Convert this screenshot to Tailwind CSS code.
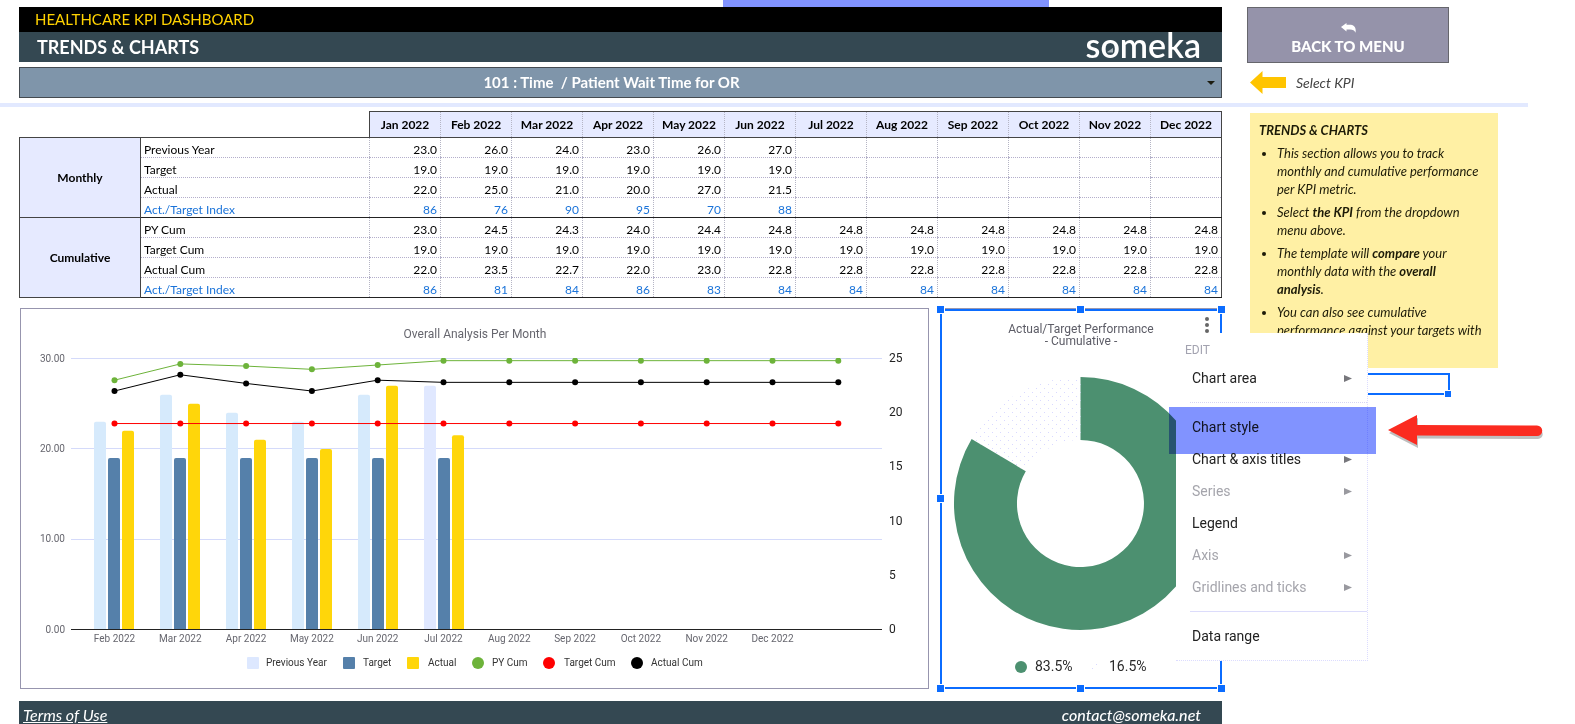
<!DOCTYPE html>
<html lang="en">
<head>
<meta charset="utf-8">
<title>Healthcare KPI Dashboard</title>
<script src="https://cdn.jsdelivr.net/npm/@tailwindcss/browser@4"></script>
</head>
<body class="bg-white font-[Lato,sans-serif] text-black">
<div class="relative min-h-screen">
  <div class="ml-[723px] h-[7px] w-[326px] bg-[#8193ff]"></div>

  <header class="flex">
    <div class="min-w-0 flex-1 pl-[19px]">
      <div class="flex h-[25px] items-center bg-black pl-4 text-[15px] text-[#ffd200]">HEALTHCARE KPI DASHBOARD</div>
      <div class="flex h-[30px] items-center justify-between bg-[#344852] pl-[18px] pr-[21px] text-white">
        <h1 class="text-[18px] font-bold">TRENDS &amp; CHARTS</h1>
        <span class="relative self-start text-[34px] leading-[26px] font-semibold">someka<svg class="absolute left-[21px] top-[16px]" width="7" height="5" viewBox="0 0 7 5"><path d="M0 4 6 0v4.500H1z" fill="#a9b4ba"/></svg></span>
      </div>
      <div class="relative mt-[5px]">
        <select aria-label="KPI" class="block h-[31px] w-full appearance-none border border-[#444a50] bg-[#7f95aa] pr-[18px] text-center text-[15px] font-bold text-white [text-align-last:center]">
          <option>101 : Time&nbsp; / Patient Wait Time for OR</option>
        </select>
        <svg class="pointer-events-none absolute right-[7px] top-[14px]" width="8" height="4" viewBox="0 0 8 4"><path d="M0 0h8L4 4z" fill="#1c1c10"/></svg>
      </div>
    </div>
    <div class="w-[353px] pl-[25px]">
      <button class="flex h-[56px] w-[202px] flex-col items-center justify-end border border-[#66666c] bg-[#9593aa] pb-[6px] text-white">
        <svg width="15" height="10" viewBox="0 0 15 10"><path d="M0 4 5.500 0v1.800h3c4.500 0 7 2.500 6 8-1-2.600-2.600-3.300-5.500-3.300H5.500v2z" fill="#fff"/></svg>
        <span class="mt-[3px] text-[15px] leading-[20px] font-black">BACK TO MENU</span>
      </button>
      <div class="mt-2 flex items-center gap-[10px] pl-[3px]">
        <svg width="36" height="23" viewBox="0 0 36 23"><path d="M0 11.500 12.500 0v6H36v11H12.500v6z" fill="#ffc400"/></svg>
        <span class="text-[14px] leading-[23px] italic text-[#444]">Select KPI</span>
      </div>
    </div>
  </header>

  <div class="mr-[47px] mt-[5px] h-[4px] bg-[#e2e9ff]"></div>

  <main class="mt-1 flex">
    <div class="min-w-0 flex-1 pl-[19px]">
      <table class="w-full table-fixed border-collapse text-[12px] leading-[18px]">
        <colgroup><col class="w-[121px]"><col class="w-[229px]"></colgroup>
        <thead><tr id="months" class="h-[26px]"><td colspan="2"></td></tr></thead>
        <tbody id="rows"></tbody>
      </table>

      <div class="mt-[10px] flex gap-[11px]">
        <section aria-label="Overall analysis" class="ml-px flex-1 border border-[#9795ae]">
          <svg id="combo" class="block w-full font-[Roboto,sans-serif]" viewBox="21 309 907 379"></svg>
        </section>
        <section aria-label="Actual target performance" class="w-[282px]">
          <svg class="block w-full overflow-visible font-[Roboto,sans-serif]" viewBox="940 308 282 381">
            <defs>
              <pattern id="dots" width="8" height="8" patternUnits="userSpaceOnUse"><path d="M0 0h1v1h-1zM4 4h1v1h-1z" fill="#d9d9ff"/></pattern>
            </defs>
            <path d="M1080.500 377A126.500 126.500 0 1 1 971.600 439.100L1025.800 471.200A63.500 63.500 0 1 0 1080.500 440z" fill="#4c9070"/>
            <path d="M971.600 439.100A126.500 126.500 0 0 1 1080.500 377V440A63.500 63.500 0 0 0 1025.800 471.200z" fill="url(#dots)"/>
            <g font-size="12" fill="#5c5c66" text-anchor="middle"><text x="1081" y="333">Actual/Target Performance</text><text x="1081" y="345">- Cumulative -</text></g>
            <circle cx="1021" cy="667" r="6" fill="#4c9070"/>
            <g font-size="14" fill="#2a2a2a"><text x="1035" y="671">83.5%</text><text x="1109" y="671">16.5%</text></g>
            <path d="M1092 668h1v1h-1zM1096 664h1v1h-1z" fill="#d9d9ff"/>
            <g fill="#666"><circle cx="1207" cy="319" r="2"/><circle cx="1207" cy="325" r="2"/><circle cx="1207" cy="331" r="2"/></g>
            <rect x="940.500" y="308.500" width="281" height="380" fill="none" stroke="#9a98ae"/>
            <rect x="941" y="310" width="280" height="378" fill="none" stroke="#0b6cff" stroke-width="2"/>
            <g id="handles" fill="#0b6cff" stroke="#fff"></g>
          </svg>
        </section>
      </div>
    </div>

    <aside class="w-[353px] pl-[28px] pt-[2px] text-[13px] leading-[18px] italic text-[#1d1b08]">
      <div class="h-[255px] w-[248px] overflow-hidden bg-[#fff0a4] py-[8px] pl-[9px]">
        <h2 class="font-bold">TRENDS &amp; CHARTS</h2>
        <ul class="mt-[5px] list-disc space-y-[5px] pl-[18px]">
          <li>This section allows you to track<br>monthly and cumulative performance<br>per KPI metric.</li>
          <li>Select <b>the KPI</b> from the dropdown<br>menu above.</li>
          <li>The template will <b>compare</b> your<br>monthly data with the <b>overall<br>analysis</b>.</li>
          <li>You can also see cumulative<br>performance against your targets with</li>
        </ul>
      </div>
    </aside>
  </main>

  <footer class="ml-[19px] mr-[353px] mt-3 flex justify-between bg-[#344852] pl-1 pr-[21px] pt-[4px] text-[16px] leading-[19px] italic text-white">
    <a href="#terms" class="underline underline-offset-1">Terms of Use</a>
    <a href="mailto:contact@someka.net" class="font-medium">contact@someka.net</a>
  </footer>

  <!-- selected cell range partly covered by the menu -->
  <svg class="absolute right-[122px] top-[373px]" width="86" height="25" viewBox="0 0 86 25"><path d="M0 1h82v20H0" fill="none" stroke="#0b6cff" stroke-width="2"/><rect x="77.500" y="17.500" width="7" height="7" fill="#0b6cff" stroke="#fff"/></svg>

  <!-- chart context menu -->
  <div role="menu" class="absolute right-[207px] top-[333px] w-[192px] border-b border-r border-dotted border-[#dcdcff] bg-white pb-2 font-[Roboto,sans-serif] text-[14px] text-[#222]">
    <div class="h-[29px] pl-[9px] text-[12px] leading-[34px] text-[#a3a3b0]">EDIT</div>
    <button role="menuitem" class="flex h-8 w-full items-center justify-between pl-4 pr-[15px]">Chart area<svg width="8" height="7" viewBox="0 0 8 7"><path d="M0 0 8 3.500 0 7z" fill="#77777c"/></svg></button>
    <hr class="mb-2 ml-[14px] mt-2 border-dotted border-[#d6d6f4]">
    <button role="menuitem" class="flex h-8 w-full items-center justify-between pl-4 pr-[15px]">Chart style</button>
    <button role="menuitem" class="flex h-8 w-full items-center justify-between pl-4 pr-[15px]">Chart &amp; axis titles<svg width="8" height="7" viewBox="0 0 8 7"><path d="M0 0 8 3.500 0 7z" fill="#77777c"/></svg></button>
    <button role="menuitem" disabled class="flex h-8 w-full items-center justify-between pl-4 pr-[15px] text-[#a5a5ac]">Series<svg width="8" height="7" viewBox="0 0 8 7"><path d="M0 0 8 3.500 0 7z" fill="#99999f"/></svg></button>
    <button role="menuitem" class="flex h-8 w-full items-center justify-between pl-4 pr-[15px]">Legend</button>
    <button role="menuitem" disabled class="flex h-8 w-full items-center justify-between pl-4 pr-[15px] text-[#a5a5ac]">Axis<svg width="8" height="7" viewBox="0 0 8 7"><path d="M0 0 8 3.500 0 7z" fill="#99999f"/></svg></button>
    <button role="menuitem" disabled class="flex h-8 w-full items-center justify-between pl-4 pr-[15px] text-[#a5a5ac]">Gridlines and ticks<svg width="8" height="7" viewBox="0 0 8 7"><path d="M0 0 8 3.500 0 7z" fill="#99999f"/></svg></button>
    <hr class="mb-2 ml-[14px] mt-2 border-[#dcdcfb]">
    <button role="menuitem" class="flex h-8 w-full items-center justify-between pl-4 pr-[15px]">Data range</button>
  </div>
  <div class="pointer-events-none absolute right-[199px] top-[407px] h-[47px] w-[207px] bg-[#8193ff] mix-blend-multiply"></div>

  <!-- callout arrow -->
  <svg class="absolute right-[28px] top-[413px]" width="160" height="36" viewBox="0 0 160 36">
    <g transform="translate(1 3)" fill="#000" opacity=".25"><path d="M1 17 30 2v10.500l120 1a4.500 4.500 0 0 1 0 9.500l-120-.500V32z"/></g>
    <path d="M1 17 30 2v10l120 .500a5 5 0 0 1 0 10.500l-120-.500V32z" fill="#fb2b20"/>
  </svg>
</div>

<script>
const names = ['Jan','Feb','Mar','Apr','May','Jun','Jul','Aug','Sep','Oct','Nov','Dec'].map(m => m + ' 2022');
document.getElementById('months').innerHTML += names.map((m, i) =>
  `<th scope="col" class="border border-y-[#444] bg-[#e6eaff] p-0 font-bold ${i === 0 ? 'border-l-[#444] border-r-[#b5b5c5] [border-right-style:dotted]' : i === 11 ? 'border-r-[#444] border-l-[#b5b5c5] [border-left-style:dotted]' : 'border-x-[#b5b5c5] [border-left-style:dotted] [border-right-style:dotted]'}">${m}</th>`).join('');

const groups = [
  ['Monthly', [['Previous Year','23.0 26.0 24.0 23.0 26.0 27.0'],['Target','19.0 19.0 19.0 19.0 19.0 19.0'],['Actual','22.0 25.0 21.0 20.0 27.0 21.5'],['Act./Target Index','86 76 90 95 70 88']]],
  ['Cumulative', [['PY Cum','23.0 24.5 24.3 24.0 24.4 24.8 24.8 24.8 24.8 24.8 24.8 24.8'],['Target Cum','19.0 19.0 19.0 19.0 19.0 19.0 19.0 19.0 19.0 19.0 19.0 19.0'],['Actual Cum','22.0 23.5 22.7 22.0 23.0 22.8 22.8 22.8 22.8 22.8 22.8 22.8'],['Act./Target Index','86 81 84 86 83 84 84 84 84 84 84 84']]]
];
document.getElementById('rows').innerHTML = groups.map(([g, rows]) => rows.map(([label, vals], r) => {
  const v = vals.split(' ');
  const color = r === 3 ? 'text-[#1a73d9]' : '';
  const edge = r === 3 ? 'border-b border-b-[#222]' : 'border-b border-b-[#b3aecb] [border-bottom-style:dotted]';
  let h = '<tr class="h-[20px]">';
  if (r === 0) h += `<th scope="rowgroup" rowspan="4" class="border border-[#444] bg-[#e6eaff] p-0 font-bold">${g}</th>`;
  h += `<th scope="row" class="${edge} ${color} ${r === 0 ? 'border-t border-t-[#444]' : ''} border-l border-l-[#444] p-0 pl-[3px] pt-[4px] text-left font-normal leading-[15px]">${label}</th>`;
  for (let i = 0; i < 12; i++) h += `<td class="${edge} ${color} border-l border-l-[#b5b5c5] [border-left-style:dotted] ${i === 11 ? 'border-r border-r-[#444]' : ''} p-0 pr-[3px] pt-[4px] text-right leading-[15px]">${v[i] || ''}</td>`;
  return h + '</tr>';
}).join('')).join('');

// combo chart: bars on the left axis (0-30), lines on the right axis (0-25)
const base = 629.5, L = v => base - v * 9.03, R = v => base - v * 10.84, X = i => 114.5 + 65.8 * i;
let s = '<text x="475" y="338" text-anchor="middle" font-size="12" fill="#66666e">Overall Analysis Per Month</text>';
[30, 20, 10].forEach(v => s += `<path d="M71 ${Math.floor(L(v)) + .5}H882" stroke="#d4dafa"/>`);
const bar = (x, v, c) => `<path d="M${x} ${base}V${L(v) + 2}q0-2 2-2h8q2 0 2 2V${base}z" fill="${c}"/>`;
[[23,22],[26,25],[24,21],[23,20],[26,27],[27,21.5]].forEach(([p, a], i) => {
  const x = 94 + 66 * i;
  s += bar(x, p, i === 5 ? '#e0e8ff' : '#d6eafc') + bar(x + 14, 19, '#5580aa') + bar(x + 28, a, '#ffd60a');
});
s += `<path d="M71 ${base}H882" stroke="#222"/><clipPath id="plot"><rect x="71" y="358" width="812" height="272"/></clipPath><g clip-path="url(#plot)">`;
const pad = a => [...a, ...Array(12 - a.length).fill(a[a.length - 1])];
[[[23,24.5,24.3,24,24.4,24.8],'#6db33a'],[[22,23.5,22.7,22,23,22.8],'#000'],[[19],'#ff0000']].forEach(([d, c]) => {
  const p = pad(d);
  s += `<polyline points="${p.map((v, i) => X(i) + ',' + R(v)).join(' ')}" fill="none" stroke="${c}"/>`;
  p.forEach((v, i) => s += `<circle cx="${X(i)}" cy="${R(v)}" r="3" fill="${c}"/>`);
});
s += '</g><g font-size="10" fill="#66666e">';
[30, 20, 10, 0].forEach(v => s += `<text x="65" y="${L(v) + 3}" text-anchor="end">${v}.00</text>`);
names.slice(1).forEach((m, i) => s += `<text x="${X(i)}" y="642" text-anchor="middle">${m}</text>`);
s += '</g><g font-size="12" fill="#222">';
[25, 20, 15, 10, 5, 0].forEach(v => s += `<text x="889" y="${R(v) + 3.5}">${v}</text>`);
s += '</g><g font-size="10" fill="#333">';
[[247,266,'Previous Year','#dde8ff'],[343,363,'Target','#5580aa'],[407,428,'Actual','#ffd60a']].forEach(([x, t, n, c]) => s += `<rect x="${x}" y="657" width="12" height="12" rx="1" fill="${c}"/><text x="${t}" y="666">${n}</text>`);
[[478,492,'PY Cum','#6db33a'],[549,564,'Target Cum','#ff0000'],[637,651,'Actual Cum','#000']].forEach(([x, t, n, c]) => s += `<circle cx="${x}" cy="663" r="6" fill="${c}"/><text x="${t}" y="666">${n}</text>`);
document.getElementById('combo').innerHTML = s + '</g>';

document.getElementById('handles').innerHTML = [[940,309],[1080,309],[1221,309],[940,498],[940,688],[1080,688],[1221,688]]
  .map(([x, y]) => `<rect x="${x - 3.5}" y="${y - 3.5}" width="8" height="8"/>`).join('');
</script>
</body>
</html>
